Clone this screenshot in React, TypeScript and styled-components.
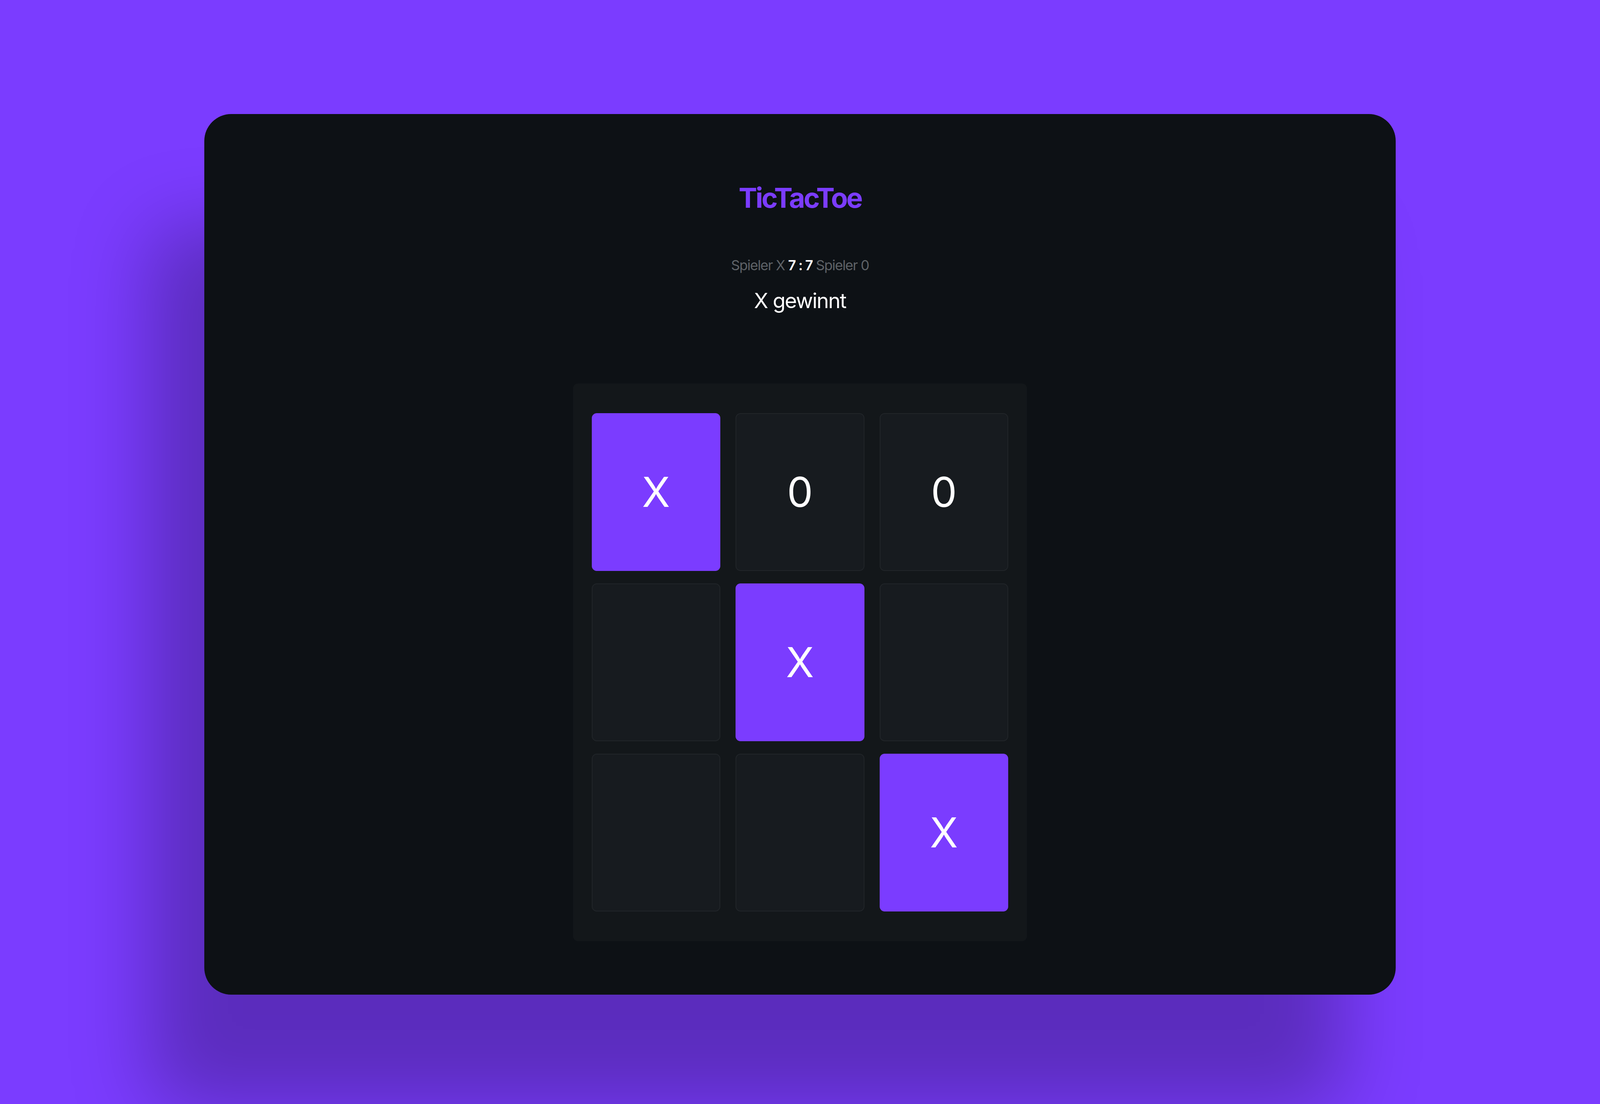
import React from 'react'
import styled, { createGlobalStyle } from 'styled-components'

type Mark = 'X' | '0' | ''

const board: Mark[] = ['X', '0', '0', '', 'X', '', '', '', 'X']
const winningLine = [0, 4, 8]

// sizes are given in reference pixels (5024 x 2827) and scaled per axis
const GlobalStyle = createGlobalStyle`
  :root {
    --ux: calc(100vw / 5024);
    --uy: calc(100vh / 2827);
    --uf: calc((100vw / 5024 + 100vh / 2827) / 2);
  }

  html, body {
    margin: 0;
    padding: 0;
    background: #7b3cff;
  }

  body {
    font-family: Inter, "Noto Sans", "Liberation Sans", sans-serif;
    -webkit-font-smoothing: antialiased;
  }
`

export default function App(): React.JSX.Element {
  return (
    <>
      <GlobalStyle />
      <Page>
        <Card>
          <Title>TicTacToe</Title>
          <Score>
            Spieler X <ScoreValue>7 : 7</ScoreValue> Spieler 0
          </Score>
          <Status>X gewinnt</Status>

          <Board>
            {board.map((mark, i) => (
              <Cell key={i} $winner={winningLine.includes(i)}>
                {mark}
              </Cell>
            ))}
          </Board>
        </Card>
      </Page>
    </>
  )
}

const Page = styled.div`
  display: flex;
  justify-content: center;
  height: 100vh;
  padding-top: calc(292 * var(--uy));
  box-sizing: border-box;
  overflow: hidden;
`

const Card = styled.main`
  display: flex;
  flex-direction: column;
  align-items: center;
  width: calc(3741 * var(--ux));
  height: calc(2255 * var(--uy));
  padding-top: calc(175 * var(--uy));
  box-sizing: border-box;
  border-radius: calc(76 * var(--uf));
  background: #0d1115;
  box-shadow: calc(-170 * var(--ux)) calc(290 * var(--uy)) calc(220 * var(--uf))
    rgba(0, 0, 0, 0.26);
`

const Title = styled.h1`
  margin: 0;
  height: calc(78 * var(--uy));
  font-size: calc(78 * var(--uf));
  line-height: calc(78 * var(--uy));
  font-weight: 700;
  letter-spacing: -0.055em;
  color: #7b3cff;
`

const Score = styled.div`
  margin-top: calc(115 * var(--uy));
  font-size: calc(39 * var(--uf));
  line-height: calc(40 * var(--uy));
  letter-spacing: -0.04em;
  color: #5e6267;
  white-space: pre;
`

const ScoreValue = styled.span`
  color: #ffffff;
  font-weight: 600;
`

const Status = styled.div`
  margin-top: calc(40 * var(--uy));
  font-size: calc(59 * var(--uf));
  line-height: calc(60 * var(--uy));
  letter-spacing: -0.035em;
  color: #ffffff;
`

const Board = styled.div`
  display: grid;
  grid-template-columns: repeat(3, calc(404 * var(--ux)));
  grid-auto-rows: calc(404 * var(--uy));
  column-gap: calc(48 * var(--ux));
  row-gap: calc(32 * var(--uy));
  margin-top: calc(182 * var(--uy));
  padding: calc(76 * var(--uy)) calc(59 * var(--ux));
  border-radius: calc(14 * var(--uf));
  background: #13171a;
`

const Cell = styled.div<{ $winner: boolean }>`
  display: flex;
  align-items: center;
  justify-content: center;
  box-sizing: border-box;
  border-radius: calc(14 * var(--uf));
  border: calc(3 * var(--uf)) solid ${(p) => (p.$winner ? '#7b3cff' : '#212529')};
  background: ${(p) => (p.$winner ? '#7b3cff' : '#171b1f')};
  color: #ffffff;
  font-size: calc(116 * var(--uf));
  font-weight: 400;
  line-height: 1;
`
